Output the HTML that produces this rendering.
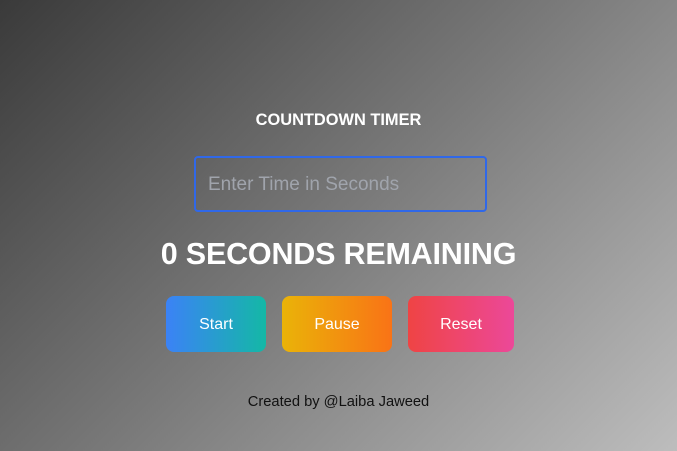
<!DOCTYPE html>
<html><head><style>
*{margin:0;padding:0;box-sizing:border-box}
html,body{width:677px;height:451px;overflow:hidden}
body{background:linear-gradient(135deg,#3a3a3a 0%,#7a7a7a 50%,#bdbdbd 100%);font-family:"Liberation Sans",sans-serif;position:relative}
.t{position:absolute;left:0;width:677px;text-align:center;color:#fff}
.in{position:absolute;left:194px;top:156px;width:293px;height:56px;border:2px solid #3068e8;border-radius:4px;color:#a0a4ac;font-size:19px;padding:16px 0 0 12px}
.big{top:237px;font-size:30.5px;font-weight:bold;letter-spacing:-0.2px}
.b{position:absolute;top:296px;height:56px;border-radius:8px;color:#fff;font-size:16px;text-align:center;line-height:58px}
.f{top:394px;font-size:14.7px;color:#111}
</style></head><body>
<div class="t" style="top:111px;font-size:16.4px;font-weight:bold">COUNTDOWN TIMER</div>
<div class="in">Enter Time in Seconds</div>
<div class="t big">0 SECONDS REMAINING</div>
<div class="b" style="left:166px;width:100px;background:linear-gradient(90deg,#3b82f6,#14b8a6)">Start</div>
<div class="b" style="left:282px;width:110px;background:linear-gradient(90deg,#eab308,#f97316)">Pause</div>
<div class="b" style="left:408px;width:106px;background:linear-gradient(90deg,#ef4444,#ec4899)">Reset</div>
<div class="t f">Created by @Laiba Jaweed</div>
</body></html>
